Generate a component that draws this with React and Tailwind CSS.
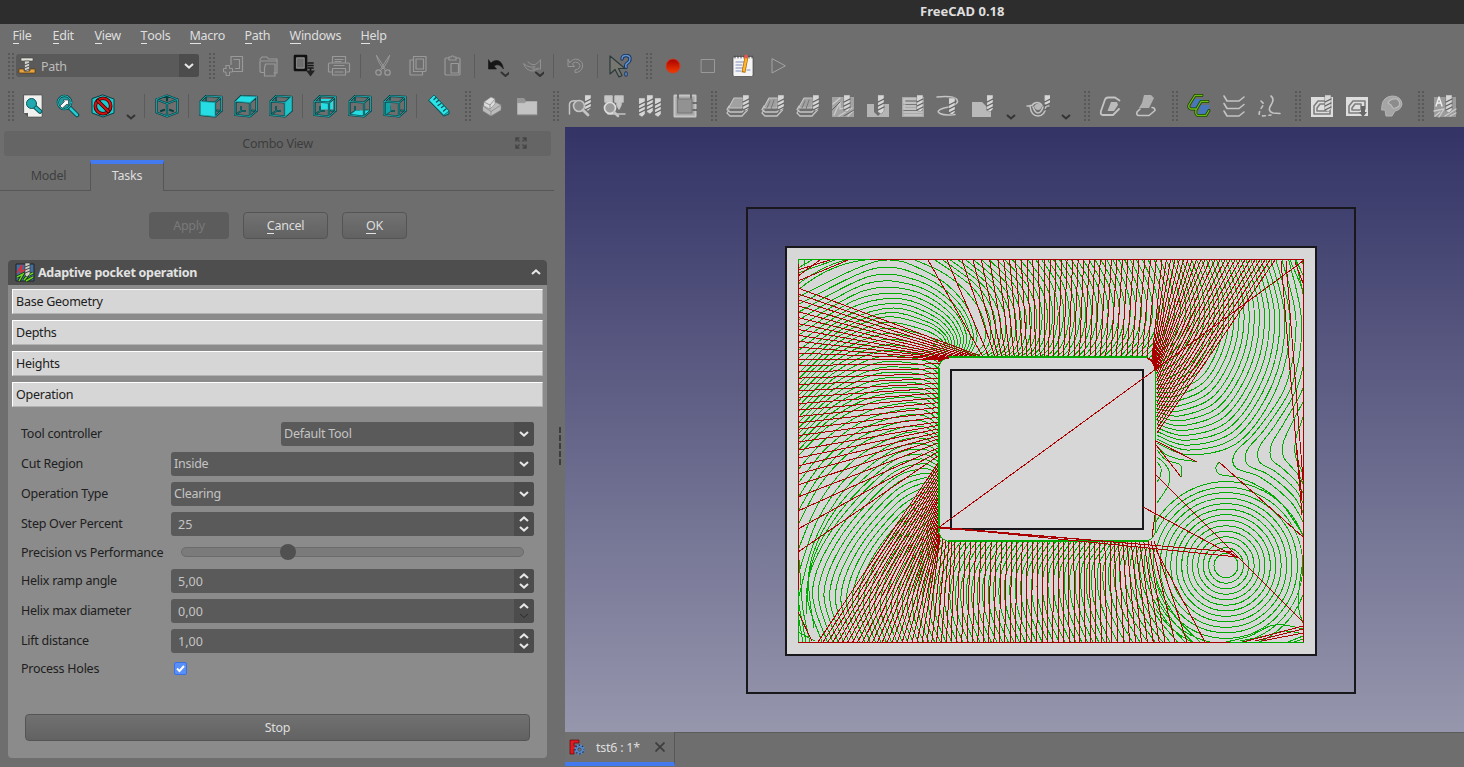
import React from "react";

/* ---------- tool path geometry ---------- */

const lerp = (a, b, t) => a + (b - a) * t;

// Interpolates between key shapes; each entry is [number of steps to the next, coordinates].
function blend(keys) {
  const out = [];
  keys.forEach(([n, pts], k) => {
    if (k === keys.length - 1) {
      out.push(pts);
      return;
    }
    const next = keys[k + 1][1];
    for (let i = 0; i < n; i++) out.push(pts.map((v, j) => lerp(v, next[j], i / n)));
  });
  return out;
}

// Smooth curve through the flat list of points.
function curve(p) {
  const n = p.length / 2;
  const at = (i) => {
    const c = Math.max(0, Math.min(n - 1, i));
    return [p[2 * c], p[2 * c + 1]];
  };
  let d = `M${p[0].toFixed(1)} ${p[1].toFixed(1)}`;
  for (let i = 0; i < n - 1; i++) {
    const [a, b, c, e] = [at(i - 1), at(i), at(i + 1), at(i + 2)];
    d += `C${[
      b[0] + (c[0] - a[0]) / 6, b[1] + (c[1] - a[1]) / 6,
      c[0] - (e[0] - b[0]) / 6, c[1] - (e[1] - b[1]) / 6,
      c[0], c[1],
    ].map((v) => v.toFixed(1)).join(" ")}`;
  }
  return d;
}

const cuts = blend([
  [21, [1157, 443, 1190, 455, 1240, 441, 1278, 385, 1290, 320, 1276, 260]],
  [23, [1155, 362, 1166, 352, 1180, 335, 1186, 310, 1182, 285, 1172, 260]],
  [13, [1040, 357, 1048, 350, 1055, 335, 1058, 310, 1052, 285, 1036, 260]],
  [1, [975, 357, 986, 349, 991, 333, 987, 310, 970, 285, 935, 260]],
  [1, [971, 357, 983, 345, 985, 325, 972, 298, 945, 274, 910, 258]],
  [10, [969, 356, 977, 335, 962, 300, 927, 272, 878, 261, 798, 297]],
  [15, [948, 347, 942, 335, 925, 325, 885, 317, 838, 337, 798, 374]],
  [5, [938, 409, 925, 399, 905, 397, 870, 403, 830, 425, 798, 456]],
  [3, [938, 436, 924, 427, 900, 428, 858, 446, 822, 482, 798, 525]],
  [3, [938, 452, 923, 444, 893, 450, 846, 488, 815, 540, 798, 600]],
  [20, [938, 466, 920, 459, 885, 472, 832, 530, 807, 588, 822, 642]],
  [32, [941, 540, 930, 556, 920, 580, 917, 600, 920, 620, 929, 642]],
  [12, [1108, 542, 1102, 550, 1093, 565, 1092, 590, 1098, 615, 1110, 642]],
  [0, [1155, 548, 1153, 560, 1156, 578, 1165, 600, 1180, 622, 1200, 642]],
]);

const rightFlow = blend([
  [5, [1303, 522, 1290, 501, 1260, 477, 1236, 468, 1235, 453, 1257, 430, 1286, 385, 1296, 320, 1282, 260]],
  [0, [1303, 474, 1301, 469, 1298, 463, 1295, 453, 1296, 438, 1304, 415, 1318, 380, 1324, 330, 1316, 260]],
]);

const smallCuts = [
  [1157, 446, 1165, 454, 1178, 459, 1192, 461, 1197, 462],
  [1157, 450, 1166, 460, 1179, 464, 1182, 470, 1181, 477],
  [1157, 457, 1165, 464, 1170, 474, 1168, 486, 1157, 503],
  [1157, 462, 1161, 468, 1160, 477, 1157, 482],
  [1219, 462, 1216, 467, 1217, 472, 1222, 475, 1240, 478, 1262, 488, 1282, 504, 1303, 535],
  [1303, 560, 1299, 590, 1299, 610, 1303, 623],
  [1226, 642, 1250, 636, 1270, 626, 1284, 625, 1303, 629],
  [1240, 641, 1265, 636, 1285, 631, 1303, 634],
  [799, 560, 801, 585, 803, 610, 810, 642],
];

const links = blend([
  [14, [1157, 433, 1275, 260]],
  [10, [1157, 372, 1205, 260]],
  [4, [1152, 358, 1162, 260]],
  [15, [1132, 358, 1139, 260]],
  [10, [1053, 358, 1056, 260]],
  [3, [1010, 358, 998, 260]],
  [1, [998, 357, 973, 260]],
  [1, [995, 357, 962, 260]],
  [1, [989, 357, 947, 260]],
  [0, [983, 357, 928, 260]],
]);

const leftLinks = blend([
  [12, [983, 357, 798, 288]],
  [13, [940, 359, 798, 359]],
  [4, [938, 422, 798, 442]],
  [1, [938, 436, 798, 474]],
  [1, [938, 439, 798, 485]],
  [1, [938, 443, 798, 497]],
  [1, [938, 448, 798, 511]],
  [1, [938, 452, 798, 529]],
  [0, [938, 456, 798, 552]],
]);

const bottomLinks = blend([
  [22, [938, 463, 818, 642]],
  [5, [940, 537, 927, 642]],
  [30, [955, 541, 951, 642]],
  [9, [1110, 541, 1112, 642]],
  [1, [1148, 541, 1165, 642]],
  [1, [1151, 541, 1175, 642]],
  [1, [1154, 541, 1187, 642]],
  [0, [1156, 550, 1205, 642]],
]);

const singleLinks = [
  [938, 528, 1156, 369], [1156, 369, 1303, 261],
  [938, 527, 1232, 552], [938, 527, 1238, 557], [940, 528, 1150, 545],
  [1143, 507, 1234, 556], [1228, 551, 1238, 558],
  [1156, 475, 1303, 622], [1219, 462, 1303, 537],
  [1156, 441, 1197, 462], [1156, 445, 1181, 477],
  [1281, 261, 1302, 515], [1286, 261, 1303, 480], [1297, 450, 1302, 500],
  [1295, 262, 1303, 283],
  [1243, 642, 1303, 626], [1255, 641, 1303, 629], [1262, 641, 1303, 633],
  [798, 276, 820, 260], [798, 281, 848, 260], [798, 270, 830, 260],
  [798, 612, 812, 641],
  [1155, 515, 1152, 537],
];

const rings = Array.from({ length: 14 }, (_, i) => 12 + i * 5.4);
const seg = (l) => `M${l[0]} ${l[1]}L${l[2]} ${l[3]}`;

const GREEN = "#00aa00";
const RED = "#aa0000";

function Viewport() {
  return (
    <svg className="block h-[605px] w-[899px]" viewBox="565 127 899 605" fill="none" shapeRendering="crispEdges">
      <defs>
        <linearGradient id="sky" x1="0" y1="0" x2="0" y2="1">
          <stop offset="0" stopColor="#333366" />
          <stop offset="1" stopColor="#9696ad" />
        </linearGradient>
        <clipPath id="stock"><rect x="798" y="259" width="506" height="384" /></clipPath>
        <clipPath id="rightSide"><rect x="1156" y="440" width="148" height="203" /></clipPath>
      </defs>
      <rect x="565" y="127" width="899" height="605" fill="url(#sky)" />
      <rect x="747" y="208" width="608" height="485" stroke="#18181c" strokeWidth="2" />
      <rect x="786" y="247" width="530" height="408" fill="#d7d7d7" stroke="#18181c" strokeWidth="2" />
      <g clipPath="url(#stock)">
        <g stroke={GREEN}>
          {cuts.map((p, i) => <path key={i} d={curve(p)} />)}
          {rightFlow.map((p, i) => <path key={i} d={curve(p)} />)}
          {smallCuts.map((p, i) => <path key={i} d={curve(p)} />)}
          <g clipPath="url(#rightSide)">
            {rings.map((r) => <ellipse key={r} cx={1226} cy={565.5} rx={r} ry={r * 1.02} />)}
          </g>
          <path d="M798 268L812 260M798 273L835 260M804 259V266M798 600L806 642M798 615L803 642M798 632L815 641M1290 260L1303 290M1296 260L1303 275M1288 642L1303 636M1294 642L1303 639" />
          <path d="M798 290Q835 259 880 259M798 284Q825 264 850 259" />
        </g>
        <g stroke={RED}>
          {links.map((l, i) => <path key={i} d={seg(l)} />)}
          {leftLinks.map((l, i) => <path key={i} d={seg(l)} />)}
          {bottomLinks.map((l, i) => <path key={i} d={seg(l)} />)}
        </g>
      </g>
      <rect x="938.5" y="357.5" width="217" height="184" rx="12" fill="#d7d7d7" stroke={GREEN} />
      <path d="M948 541H1148M948 357H1148M939 368V532" stroke={GREEN} strokeWidth="2" />
      <path d="M798.5 642.5V259.5H870M1225 642H1303.5" stroke={GREEN} />
      <path d="M870 259.5H1303.5V642M798.5 264V590M798 642.5H1230M1155.5 440V515" stroke={RED} />
      <path d="M938.5 362Q941 358 949 357.5M1147 358Q1154 360 1155.5 370" stroke={RED} strokeWidth="2" />
      <rect x="951" y="370" width="192" height="159" stroke="#18181c" strokeWidth="2" />
      <g stroke={RED}>{singleLinks.map((l, i) => <path key={i} d={seg(l)} />)}</g>
    </svg>
  );
}

/* ---------- toolbar icons ---------- */

const LT = "#c4c4c4";
const Icon = ({ children, className = "size-6" }) => (
  <svg viewBox="0 0 24 24" className={className} fill="none" strokeLinejoin="round" strokeLinecap="round">{children}</svg>
);

const WIRE_FRONT = "M1.5 7.5L16 8.500V22.500L1.500 21ZM1.500 7.500L7 2L22.500 2.800L16 8.500M22.500 2.800V17L16 22.500";
const WIRE_BACK = "M7 2V7M7 13V17L1.500 21M7 17H11M18 16.500L22.500 17";
const faces = {
  front: "M1.5 7.5L16 8.500V22.500L1.500 21Z",
  top: "M1.5 7.500L7 2L22.500 2.800L16 8.500Z",
  right: "M16 8.500L22.500 2.800V17L16 22.500Z",
  rear: "M8 5H20V15.500H8Z",
  bottom: "M2 21L8 16.500H21.500L16 22.500Z",
  left: "M2 8L7.500 6V17L2 21Z",
};
const Cube = ({ face }) => {
  const near = face === "front" || face === "top" || face === "right";
  return (
    <Icon>
      <path d={WIRE_BACK} stroke="#083f41" strokeWidth="2" />
      <path d={WIRE_BACK} stroke="#1d8a8d" strokeWidth=".8" />
      {!near && <path d={faces[face]} fill={face === "left" ? "#12a3a8" : "#25dde2"} />}
      <path d={WIRE_FRONT} stroke="#083f41" strokeWidth="2.200" />
      {near && <path d={faces[face]} fill={face === "right" ? "#1cc4c9" : "#25dde2"} />}
      <path d={WIRE_FRONT} stroke="#22a7ab" strokeWidth=".9" />
    </Icon>
  );
};

const Drill = ({ x = 17, y = 1, h = 17 }) => (
  <g>
    <path d={`M${x} ${y}h6v${h - 3}l-3 3l-3 -2Z`} fill="#d6d6d6" stroke="#777" strokeWidth=".5" />
    <path d={`M${x} ${y + 7}l6 -3M${x} ${y + 11}l6 -3M${x} ${y + 15}l6 -3`} stroke="#606060" strokeWidth="1.3" />
  </g>
);

const Layers = ({ inner }) => (
  <Icon>
    <path d="M3 12l-2 3.500l3 2.500h12l5-6M3 16l-2 3l3 3h12l5.500-6" stroke={LT} strokeWidth="1.300" />
    <path d="M8 4h9l-1 10H2.500Z" fill="#a0a0a0" stroke={LT} strokeWidth="1.100" />
    {inner === 1 && <path d="M9 7l-3 7M13 6l-3 9" stroke="#777" strokeWidth="1" />}
    <Drill x={17} y={1} h={16} />
  </Icon>
);

const icons = {
  newDoc: <Icon><path d="M9 2.500h11.500v15h-9M9 2.500v8M12 5.500h5.500v9h-4" stroke="#999" strokeWidth="1.200" /><path d="M4 11.500h3.500v3h3v3.500h-3v3.500H4V18H1.500v-3.500H4Z" stroke="#999" fill="#6e6e6e" /></Icon>,
  open: <Icon><path d="M3 7h17v12h-3M3 7v9.500q0 2 2 2h2M3 5.500L5 3h5l1.500 2H20V7M8.500 10h9.500v12H7.500V14Z" stroke="#999" strokeWidth="1.200" /></Icon>,
  save: <Icon><rect x="3" y="2" width="11" height="14" stroke="#111" strokeWidth="2.600" /><rect x="4.800" y="4" width="7.400" height="10" fill="#6e6e6e" stroke="#aaa" strokeWidth=".6" /><path d="M16 9h5M16 11.500h5M16 14h5M18.500 15v4" stroke="#171717" strokeWidth="1.700" /><path d="M14 16.500h9l-4.500 6Z" fill="#222" /></Icon>,
  print: <Icon><path d="M5.500 9V2.500h13V9M2.500 9h19q1 0 1 1v7q0 1-1 1h-3M5.500 18h-3q-1 0-1-1v-7q0-1 1-1M5.500 14.500h13V21h-13ZM8 5.500h8M8 7.500h6M7 11.500h10M8 18h8" stroke="#999" strokeWidth="1.200" /></Icon>,
  cut: <Icon><path d="M5.500 1.500Q7 10 15 17M18.500 1.500Q17 10 9 17M5.500 1.500l8.500 13M18.500 1.500L10 14.500" stroke="#999" /><circle cx="7.500" cy="18.500" r="2.700" stroke="#999" strokeWidth="1.300" /><circle cx="16.500" cy="18.500" r="2.700" stroke="#999" strokeWidth="1.300" /></Icon>,
  copy: <Icon><path d="M7.500 2.500h12.500v14q0 1-1 1H7.500ZM10 5h7.500v10H10ZM7.500 6h-3.500v14q0 1 1 1h11.500v-3" stroke="#999" strokeWidth="1.200" /></Icon>,
  paste: <Icon><path d="M8 4H5Q4 4 4 5v15q0 1 1 1h13q1 0 1-1V5q0-1-1-1h-3M8 3h2q1.500-2.500 3 0h2v3H8ZM10 9.500h7.500V19H10Z" stroke="#999" strokeWidth="1.200" /></Icon>,
  undo: <Icon><path d="M3.500 6v9h8l-2.500-3q5-3.500 9.500 3Q17 6 11 6.500Q8 6.700 6 9Z" fill="#161616" stroke="#161616" strokeWidth=".6" /><path d="M16.500 18.500l4 3.500l4-3.500" stroke="#333" strokeWidth="2" /></Icon>,
  redo: <Icon><path d="M20.500 6v9h-8l2.500-2.500q-6 2-11.500-3Q6 17 13 17Q16 16 18 14M20.500 6l-3 3q-4 4-9.500-1" stroke="#929292" /><path d="M16 18.500l4 3.500l4-3.500" stroke="#333" strokeWidth="2" /></Icon>,
  refresh: <Icon><path d="M6 8.500Q9 4 14 5.500Q19.500 8 18.500 13Q17 18.500 11 18.500v-2.500Q16 15 16 11.500Q15 8 11.500 8Q9 8.500 8.500 10l2 2.500h-6.500v-7Z" stroke="#969696" /></Icon>,
  whats: <Icon><path d="M2 2v18l5-4.500l4 7.500l3-1.500l-3.500-7H17Z" fill="#77776f" stroke="#2b3a3c" strokeWidth="1.200" /><path d="M14 5q0-3.500 4-3.500T22 5q0 2.500-2.500 4T18 13.500M18 19v2" stroke="#173359" strokeWidth="3.300" /><path d="M14 5q0-3.500 4-3.500T22 5q0 2.500-2.500 4T18 13.500M18 19v2" stroke="#5f93d6" strokeWidth="1.500" /></Icon>,
  record: <Icon><circle cx="12" cy="12" r="7" fill="url(#rec)" stroke="#d33a22" strokeWidth=".8" /><defs><linearGradient id="rec" x2="0" y2="1"><stop stopColor="#a80000" /><stop offset="1" stopColor="#f23d00" /></linearGradient></defs></Icon>,
  stop: <Icon><rect x="5.500" y="5.500" width="13" height="13" stroke="#999" /></Icon>,
  note: <Icon><rect x="2" y="2.500" width="20" height="20" rx="1.500" fill="#f4f4f4" stroke="#444" strokeWidth=".7" /><path d="M4 2v2M7 2v2M10 2v2M13 2v2M18 2v2M21 2v2" stroke="#444" /><path d="M5 8h9M5 11h6M5 14h8M5 17h5M16 16h3" stroke="#7f8fbd" strokeWidth="1.200" /><path d="M15.500 3l-3 15.500" stroke="#a86400" strokeWidth="3.800" strokeLinecap="butt" /><path d="M15.500 3l-2.800 14.500" stroke="#ffb62d" strokeWidth="2.400" strokeLinecap="butt" /><circle cx="15" cy="2.500" r="2" fill="#e45751" /></Icon>,
  play: <Icon><path d="M6 5v14l13-7Z" stroke="#a4a4a4" strokeLinejoin="miter" /></Icon>,
  fit: <Icon><path d="M3 1h18v22H7l-4-4Z" fill="#f0f0ee" stroke="#444" strokeWidth=".6" /><path d="M3 19h4v4Z" fill="#555" /><path d="M13 12l6 5.500" stroke="#0a5558" strokeWidth="4.500" /><path d="M13 12l6 5.500" stroke="#20b8bd" strokeWidth="2.500" /><circle cx="10.500" cy="9.500" r="5" fill="#20a9af" stroke="#0a5558" /></Icon>,
  zoomSel: <Icon><path d="M13 13l8 8" stroke="#083f41" strokeWidth="4.500" /><path d="M13 13l8 8" stroke="#20cdd2" strokeWidth="2.600" /><circle cx="8.500" cy="8.500" r="6.700" fill="#239aa0" stroke="#083f41" strokeWidth="2.200" /><circle cx="8.500" cy="8.500" r="6.700" stroke="#25c8ce" /><path d="M5 13l-1-1l4.500-4.500l-1.500-1.500h5.500v5.500l-1.500-1.500l-4.500 4Z" fill="#fff" stroke="#333" strokeWidth=".7" /></Icon>,
  style: <Icon><path d="M12 1l11 4v14l-11 4L1 19V5Z" fill="#1bcbd0" stroke="#083f41" /><circle cx="12" cy="12" r="7.700" stroke="#300" strokeWidth="3.600" /><circle cx="12" cy="12" r="7.700" stroke="#d31212" strokeWidth="2" /><path d="M6.700 6.700l10.600 10.600" stroke="#300" strokeWidth="3.600" /><path d="M6.700 6.700l10.600 10.600" stroke="#d31212" strokeWidth="2" /></Icon>,
  iso: <Icon><path d="M12 1.500l10.500 4v13L12 22.500L1.500 18.500V5.500ZM1.500 5.500L12 9.500l10.500-4M12 9.500v13M12 1.500v5M6 17l3-1M18 17l-3-1" stroke="#083f41" strokeWidth="2.200" /><path d="M12 1.500l10.500 4v13L12 22.500L1.500 18.500V5.500ZM1.500 5.500L12 9.500l10.500-4M12 9.500v13" stroke="#20a4a8" strokeWidth=".9" /></Icon>,
  measure: <Icon><path d="M2 6l5-5l15 16v3l-5 2Z" fill="#18bcc3" stroke="#075257" /><path d="M2 6l5-5l15 16l-5 4Z" fill="#2ce5e8" stroke="#075257" strokeWidth=".7" /><path d="M9 3.500l-2 2M11.500 6.500L9.500 8M14 9.500L11 11.500M16.500 12l-2 1.500M19 15l-2.500 2" stroke="#075257" strokeWidth="1.300" /></Icon>,
  part: <Icon><path d="M3 12L13 7l8 4v5l-10 6l-8-5Z" fill="#bbb" stroke="#888" strokeWidth=".5" /><path d="M4 8l7-5l4 2v5l-5 5l-6-3Z" fill="#dcdcdc" stroke="#888" strokeWidth=".6" /><path d="M4 8l6 3l5-6M10 11v4M3 12l8 5.500l10-6.500M11 17.500v4" stroke="#888" strokeWidth=".8" /></Icon>,
  folder: <Icon><path d="M2 20V4h7l2 3h11v13Z" fill="#969696" /><path d="M2.500 20.500V9h7l2-1.500H22v13Z" fill="#c3c3c3" stroke="#aaa" strokeWidth=".5" /></Icon>,
  inspect: <Icon><path d="M1.500 20V10q1-4 7-3" stroke={LT} strokeWidth="1.500" /><Drill x={17} y={1} h={16} /><circle cx="11" cy="12" r="5.500" fill="#888" stroke={LT} strokeWidth="1.700" /><path d="M15 16l5 5" stroke={LT} strokeWidth="2.800" /></Icon>,
  simulate: <Icon><path d="M2 2h7v6H2ZM5 8v12h5M12 2h8v6h-2v3l-2 4l-2-4V8h-2ZM11 20h11" fill="#c8c8c8" stroke={LT} strokeWidth="1.500" /><circle cx="7" cy="14" r="5.500" fill="#999" stroke="#ddd" strokeWidth="1.700" /><path d="M11 18l4 4" stroke={LT} strokeWidth="2.500" /></Icon>,
  tools: <Icon><g>{[1, 9, 17].map((x) => <Drill key={x} x={x} y={x === 9 ? 1 : 4} h={19} />)}</g></Icon>,
  job: <Icon><rect x="1.500" y="1.500" width="21" height="21" fill="#a7a7a7" stroke="#c5c5c5" strokeWidth="2" /><rect x="5" y="5" width="14" height="14" fill="#929292" stroke="#777" /><path d="M5 0v4M18 0v4M20 9h4M20 16h4" stroke="#555" strokeWidth="1.500" /></Icon>,
  contour: <Layers inner={0} />,
  pocket: <Layers inner={1} />,
  face: <Layers inner={1} />,
  engrave: <Icon><path d="M1 3h22v20H1Z" fill="#a3a3a3" /><path d="M3 21l6-13v7l7-2M2 10l7-6M8 22l13-8M17 22l5-5" stroke="#ccc" strokeWidth="1.300" /><path d="M1 16l8-8M13 22l10-6" stroke="#666" /><Drill x={13} y={1} h={17} /></Icon>,
  drilling: <Icon><path d="M1 10h7v8l4 4l4-4v-8h7v13H1Z" fill="#b5b5b5" /><Drill x={12} y={1} h={19} /></Icon>,
  pocketShape: <Icon><path d="M1 3h22v20H1Z" fill="#aaa" /><path d="M16 5H3v4h13M16 12H3v3h13M3 18h18M3 21h18" stroke="#c8c8c8" strokeWidth="1.500" /><path d="M5 7h11M5 10.500h11M3 16.500h18" stroke="#777" /><Drill x={16} y={1} h={17} /></Icon>,
  helix: <Icon><path d="M1 3Q22 1 21.500 8Q20 12 8 14Q-1 17 4 19.500Q9 22 19 20.500" stroke={LT} strokeWidth="1.600" /><Drill x={13} y={4} h={17} /></Icon>,
  chamfer: <Icon><path d="M1 8h10l9 9v6H1Z" fill="#b9b9b9" /><Drill x={16} y={1} h={17} /></Icon>,
  surface: <Icon><path d="M1 12h3q1 10 8 10t8-10h3M4 11.500h2q2-3 5-3t5 3M7 13q2 6 5 6t5-6" stroke={LT} strokeWidth="1.500" /><path d="M8 12q4-5 8 0q-1 4-4 4t-4-4Z" fill="#b8b8b8" /><Drill x={18.500} y={1} h={11} /></Icon>,
  loop: <Icon><path d="M16 3.500H9q-2 0-3 2L2 17q-1 4 2 4h10l6-6M16 3.500l4.500 3" stroke={LT} strokeWidth="1.800" /><path d="M12 8h6l1 3l-4 6H8.500Z" fill="#bbb" /></Icon>,
  loop2: <Icon><path d="M10 1h7l3 3l-5 10H5l3-5Z" fill="#b0b0b0" /><path d="M6 15l-3 3q-1 3.500 2 3.500h10l6-5q0-3-3-3" stroke={LT} strokeWidth="1.600" /></Icon>,
  areas: <Icon><path d="M7 5h9l-3 9H4ZM14 11h9l-3 9h-9Z" fill="#4777ba" /><path d="M15 1.500H8L2 11q-1 3 2 4h5M21 7.500h-7L9 16q-1 5 2 5.500h8l3-5" stroke="#193c05" strokeWidth="2.800" /><path d="M15 1.500H8L2 11q-1 3 2 4h5M21 7.500h-7L9 16q-1 5 2 5.500h8l3-5" stroke="#6bbb17" strokeWidth="1.400" /></Icon>,
  stack: <Icon><path d="M2 2l3 5h12l5-4M2 9.500l3 5h12l5-4M2 17l3 5h12l5-4" stroke={LT} strokeWidth="1.600" /></Icon>,
  dash: <Icon><path d="M14 2q4 3 0 9q-4 6 2 8l7 .5" stroke={LT} strokeWidth="1.600" /><path d="M4 7l3 3l-4 6l-1 4l4 2l8-1" stroke={LT} strokeWidth="1.600" strokeDasharray="3 3.500" /></Icon>,
  dressA: <Icon><rect x="1" y="3" width="22" height="20" fill="#dedede" /><path d="M20 7H8l-4 5v8h16v-4M18 10h-8l-3 4v3h10" stroke="#7d7d7d" strokeWidth="1.600" /><Drill x={15} y={1} h={17} /></Icon>,
  dressB: <Icon><rect x="1" y="3" width="22" height="19" fill="#dedede" /><path d="M20 15V7H8l-4 5v7h11M16 15v-5h-6l-3 4v2h8" stroke="#7d7d7d" strokeWidth="1.600" /><path d="M16 12v6h-2l4 5l4-5h-2v-6Z" fill="#666" /></Icon>,
  head: <Icon><path d="M2 11Q3 3 12 2q9 0 10 8q-1 6-7 7l-3 5H6l-1-6H2Z" fill="#a5a5a5" stroke="#b5b5b5" /><path d="M8 9q2-5 9-4q4 3 2 7q-3 3-6 2l-2-3Z" fill="#8c8c8c" stroke="#bbb" strokeWidth="1.200" /></Icon>,
  post: <Icon><path d="M1 3h22v20H1Z" fill="#9b9b9b" /><path d="M1 17l10-2l-5 8M12 22l11-7M2 22l5-4M17 22l6-3" stroke="#ccc" strokeWidth="1.300" /><path d="M3 12L6 3l3 9M4 9h4" stroke="#eee" strokeWidth="1.400" /><Drill x={13} y={1} h={18} /></Icon>,
};

["front", "top", "right", "rear", "bottom", "left"].forEach((f) => {
  icons[f] = <Cube face={f} />;
});

const Cell = ({ children }) => <div className="flex w-[35px] shrink-0 items-center justify-center">{children}</div>;
const Sep = () => <div className="flex w-[9px] shrink-0 justify-center"><div className="h-6 w-px bg-[#5c5c5c]" /></div>;
const Grip = ({ rows = 7, className = "w-[18px] pl-1.5" }) => (
  <div className={`flex shrink-0 justify-center ${className}`}>
    <div className="grid grid-cols-2 gap-0.5">
      {Array.from({ length: rows * 2 }, (_, i) => <i key={i} className="size-0.5 bg-[#585858]" />)}
    </div>
  </div>
);
const Drop = () => (
  <div className="flex w-5 shrink-0 justify-center pt-[22px] pl-0.5">
    <svg viewBox="0 0 10 6" className="h-1.5 w-2.5" fill="none"><path d="M1 1l4 3.500L9 1" stroke="#333" strokeWidth="2" /></svg>
  </div>
);

const render = (list, rows) =>
  list.map((n, i) => {
    if (n === "|") return <Sep key={i} />;
    if (n === ":") return <Grip key={i} rows={rows} />;
    if (n === "v") return <Drop key={i} />;
    return <Cell key={i}>{icons[n]}</Cell>;
  });

const row1 = ["newDoc", "open", "save", "print", "|", "cut", "copy", "paste", "|", "undo", "redo", "|", "refresh", "|", "whats", ":", "record", "stop", "note", "play"];
const row2 = ["fit", "zoomSel", "style", "v", "|", "iso", "|", "front", "top", "right", "|", "rear", "bottom", "left", "|", "measure", ":", "part", "folder", ":", "inspect", "simulate", "tools", "job", ":", "contour", "pocket", "face", "engrave", "drilling", "pocketShape", "helix", "chamfer", "v", "surface", "v", ":", "loop", "loop2", ":", "areas", "stack", "dash", ":", "dressA", "dressB", "head", ":", "post"];

/* ---------- widgets ---------- */

const Chevron = ({ up, color = "#e6e6e6", thin }) => (
  <svg viewBox="0 0 10 6" className="h-1.5 w-2.5" fill="none">
    <path d={up ? "M1 5l4-3.500L9 5" : "M1 1l4 3.500L9 1"} stroke={color} strokeWidth={thin ? 1 : 2.1} />
  </svg>
);

const Select = ({ value, className = "w-[363px]" }) => (
  <div className={`flex h-6 overflow-hidden rounded-[3px] bg-[#5a5a5a] text-[#c4c4c4] ${className}`}>
    <span className="flex-1 pl-[3px] leading-[23px]">{value}</span>
    <span className="flex w-5 items-center justify-center bg-[#4c4c4c] pr-px"><Chevron /></span>
  </div>
);

const Spin = ({ value, min }) => (
  <div className="flex h-6 w-[363px] overflow-hidden rounded-[3px] bg-[#5a5a5a] text-[#c4c4c4]">
    <span className="flex-1 pl-[7px] leading-[25px] tracking-normal">{value}</span>
    <span className="flex w-5 flex-col items-center justify-center gap-1 bg-[#4c4c4c] pr-px">
      <Chevron up />
      <Chevron color={min ? "#2c2c2c" : undefined} thin={min} />
    </span>
  </div>
);

const Field = ({ label, children, className = "h-6" }) => (
  <div className={`flex items-center ${className}`}>
    <span className="flex-1 whitespace-nowrap text-[#202020]">{label}</span>
    {children}
  </div>
);

const Key = ({ text }) => (
  <span className="flex whitespace-nowrap">
    <span className="h-[17px] border-b border-[#e2e2e2]">{text[0]}</span>
    <span>{text.slice(1)}</span>
  </span>
);

const menus = [["File", "w-10"], ["Edit", "w-[42px]"], ["View", "w-[46px]"], ["Tools", "w-[49px]"], ["Macro", "w-[55px]"], ["Path", "w-[45px]"], ["Windows", "w-[71px]"], ["Help", "w-10"]];

export default function App() {
  return (
    <div className="flex h-[767px] w-[1464px] flex-col overflow-hidden bg-[#6e6e6e] font-['Noto_Sans',sans-serif] text-[12.5px] leading-[18px] tracking-[-0.25px] text-[#dedede]">
      <header className="h-6 shrink-0 bg-[#2d2d2d] pl-[920px] text-[13px] leading-[23px] font-bold tracking-normal text-[#dedede]">FreeCAD 0.18</header>

      <nav className="flex h-[23px] shrink-0 items-center pl-[12.5px]">
        {menus.map(([m, w]) => <span key={m} className={w}><Key text={m} /></span>)}
      </nav>

      <div className="flex h-[39px] shrink-0 items-center pb-0.5 pl-0.5">
        <Grip className="w-[18px]" />
        <div className="-ml-1 flex h-[23px] w-[183px] shrink-0 items-center overflow-hidden rounded-[3px] bg-[#5a5a5a] text-[#bcbcbc]">
          <svg viewBox="0 0 18 18" className="ml-0.5 size-[18px]">
            <path d="M1 12h5v2h6v-2h5v4H1Z" fill="#e8a43b" stroke="#563b12" strokeWidth=".7" />
            <path d="M3 1h12v3H3Z" fill="#e3e3d9" stroke="#444" strokeWidth=".6" />
            <path d="M6.500 4h5v9L9 15l-2.500-2Z" fill="#d2d2ca" stroke="#444" strokeWidth=".6" />
            <path d="M6.500 8l5-2M6.500 11l5-2M6.500 14l5-2" stroke="#555" />
          </svg>
          <span className="flex-1 pt-0.5 pl-[5px]">Path</span>
          <span className="flex h-full w-5 items-center justify-center bg-[#4c4c4c] pr-px"><Chevron /></span>
        </div>
        <Grip className="ml-1 w-[13px] pl-1" />
        {render(row1, 7)}
      </div>

      <div className="flex h-[41px] shrink-0 items-center pb-0.5 pl-0.5">
        <Grip rows={8} className="w-[13px] pl-1" />
        {render(row2, 8)}
      </div>

      <main className="flex min-h-0 flex-1">
        <aside className="flex w-[554px] shrink-0 flex-col">
          <div className="mt-1 ml-1 grid h-[25px] w-[547px] grid-cols-[1fr_auto_1fr] items-center rounded-[3px] bg-[#656565] text-[#3d3d3d]">
            <span />
            <span>Combo View</span>
            <svg viewBox="0 0 12 12" className="mr-6 mb-px size-3 justify-self-end" fill="none" stroke="#444" strokeWidth="1.400">
              <path d="M1 4.500V1h3.500M7.500 1H11v3.500M11 7.500V11H7.500M4.500 11H1V7.500M1 1l3.500 3.500M11 1L7.500 4.500M11 11L7.500 7.500M1 11l3.500-3.500" />
            </svg>
          </div>
          <div className="mt-1 flex h-[31px] shrink-0">
            <div className="w-[90px] border-b border-[#565656] pt-[7px] pl-[7px] text-center text-[#3f3f3f]">Model</div>
            <div className="w-[74px] border-x border-t-4 border-x-[#565656] border-t-[#437af0] pt-[3px] text-center">Tasks</div>
            <div className="flex-1 border-b border-[#565656]" />
          </div>
          <div className="mt-[21px] flex h-[27px] shrink-0 gap-3.5 pl-[149px]">
            <div className="flex w-20 items-center justify-center rounded bg-[#5c5c5c] text-[#797979]">Apply</div>
            <div className="flex w-[85px] items-center justify-center rounded border border-[#545454] bg-linear-to-b from-[#717171] to-[#626262]"><Key text="Cancel" /></div>
            <div className="flex w-[65px] items-center justify-center rounded border border-[#545454] bg-linear-to-b from-[#717171] to-[#626262]"><Key text="OK" /></div>
          </div>

          <section className="mt-[21px] ml-2 flex h-[498px] w-[539px] shrink-0 flex-col overflow-hidden rounded bg-[#8b8b8b]">
            <div className="flex h-[25px] shrink-0 items-center bg-[#4e4e4e] pr-1.5 pb-0.5 pl-[7px] font-bold tracking-[-0.28px] text-[#e2e2e2]">
              <svg viewBox="0 0 20 20" className="size-5" fill="none">
                <path d="M1 2h18v17H1Z" fill="#416f9e" stroke="#222" />
                <path d="M2 15l6-3l-4 7M9 18l4-5M11 19l7-4M14 13l4-2" stroke="#142b08" strokeWidth="3" />
                <path d="M2 15l6-3l-4 7M9 18l4-5M11 19l7-4M14 13l4-2" stroke="#6bd51d" strokeWidth="1.500" />
                <path d="M2 11l5-8l-1 7l5-3" stroke="#e22b35" strokeWidth="1.500" />
                <path d="M10 1h5v11l-3 3l-2-2Z" fill="#d0d0c8" stroke="#333" strokeWidth=".6" />
                <path d="M10 5l5-2M10 8l5-2M10 11l5-2" stroke="#444" />
              </svg>
              <span className="flex-1 pt-0.5 pl-[3px]">Adaptive pocket operation</span>
              <Chevron up />
            </div>
            <div className="flex flex-col gap-1.5 px-1 pt-1">
              {["Base Geometry", "Depths", "Heights", "Operation"].map((t) => (
                <div key={t} className="h-[25px] border border-t-white border-r-[#b2b2b2] border-b-[#b2b2b2] border-l-white bg-[#d6d6d6] pl-[3px] leading-[23px] text-[#202020]">{t}</div>
              ))}
            </div>
            <div className="mt-[15px] flex flex-col gap-1.5 pr-[13px] pl-[13px]">
              <Field label="Tool controller"><Select value="Default Tool" className="w-[253px]" /></Field>
              <Field label="Cut Region"><Select value="Inside" /></Field>
              <Field label="Operation Type"><Select value="Clearing" /></Field>
              <Field label="Step Over Percent"><Spin value="25" /></Field>
              <Field label="Precision vs Performance" className="h-[21px]">
                <div className="mr-2.5 mb-0.5 flex h-2.5 w-[343px] items-center rounded-full border border-[#6b6b6b] bg-[#7b7b7b] pl-[98px]">
                  <i className="size-4 shrink-0 rounded-full bg-[#505050]" />
                </div>
              </Field>
              <Field label="Helix ramp angle"><Spin value="5,00" /></Field>
              <Field label="Helix max diameter"><Spin value="0,00" min /></Field>
              <Field label="Lift distance"><Spin value="1,00" /></Field>
              <Field label="Process Holes" className="h-5">
                <div className="w-[360px] pb-0.5">
                  <svg viewBox="0 0 13 13" className="size-[13px]" fill="none">
                    <rect x=".5" y=".5" width="12" height="12" rx="1.500" fill="#5990f8" stroke="#3b70e6" />
                    <path d="M3 6.500L5.500 9L10 4" stroke="#fff" strokeWidth="2" />
                  </svg>
                </div>
              </Field>
            </div>
            <div className="mt-[35px] ml-[17px] flex h-[27px] w-[505px] items-center justify-center rounded border border-[#545454] bg-linear-to-b from-[#717171] to-[#626262]">Stop</div>
          </section>
        </aside>

        <div className="flex w-[11px] shrink-0 flex-col items-center gap-0.5 pt-[300px]">
          {[0, 1, 2, 3, 4].map((i) => <i key={i} className="h-1.5 w-0.5 bg-[#3c3c3c]" />)}
        </div>

        <div className="flex w-[899px] flex-col">
          <Viewport />
          <div className="flex h-[35px]">
            <div className="mb-px flex w-[110px] items-center border-r border-b-4 border-r-[#575757] border-b-[#437af0] bg-[#707070] pl-1">
              <svg viewBox="0 0 16 16" className="size-4" fill="none">
                <path d="M1 1h9v3H5v3h4v3H5v5H1Z" fill="#df1b22" stroke="#5c0709" strokeWidth=".7" />
                <circle cx="10.500" cy="10.500" r="3.300" stroke="#1d3557" strokeWidth="3.500" />
                <circle cx="10.500" cy="10.500" r="4.300" stroke="#5c8bc7" strokeWidth="2" strokeDasharray="2 1.380" />
                <circle cx="10.500" cy="10.500" r="2.800" stroke="#5c8bc7" strokeWidth="1.600" />
              </svg>
              <span className="flex-1 pt-0.5 pl-[11px] whitespace-nowrap">tst6 : 1*</span>
              <svg viewBox="0 0 10 10" className="mr-[9px] size-2.5" stroke="#3d3d3d" strokeWidth="1.700"><path d="M.5 .5l9 9M9.500 .5l-9 9" /></svg>
            </div>
            <div className="flex-1 border-t border-[#5b5b5b]" />
          </div>
        </div>
      </main>
    </div>
  );
}
